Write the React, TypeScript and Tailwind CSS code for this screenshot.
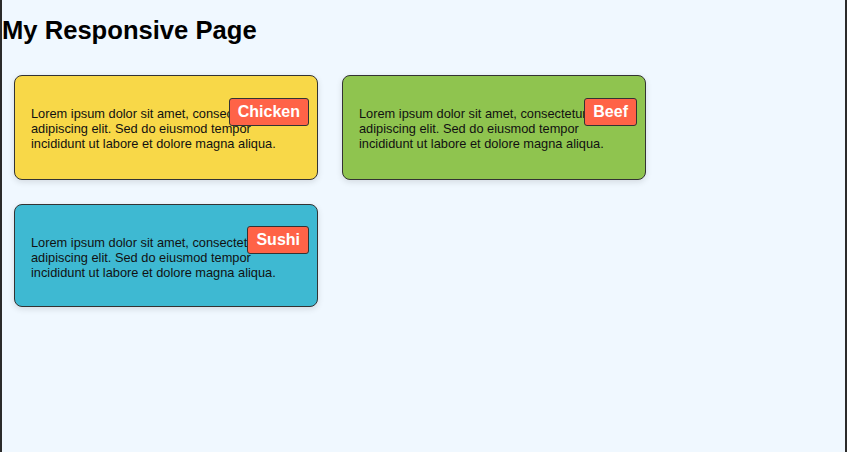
const lorem =
  "Lorem ipsum dolor sit amet, consectetur adipiscing elit. Sed do eiusmod tempor incididunt ut labore et dolore magna aliqua.";

type Card = {
  label: string;
  bg: string;
  pad: string;
  badgeTop: string;
};

const cards: Card[] = [
  { label: "Chicken", bg: "bg-[#f8d848]", pad: "pt-[30px] pb-[28px]", badgeTop: "top-[22px]" },
  { label: "Beef", bg: "bg-[#8fc44f]", pad: "pt-[30px] pb-[28px]", badgeTop: "top-[22px]" },
  { label: "Sushi", bg: "bg-[#3eb9d2]", pad: "pt-[30px] pb-[26px]", badgeTop: "top-[21px]" },
];

export default function App() {
  return (
    <div
      className="min-h-screen bg-[#f0f8ff] border-x-2 border-[#2b2b2b] text-black"
      style={{ fontFamily: '"Liberation Sans", Arial, sans-serif' }}
    >
      <h1 className="pt-[16px] text-[25.6px] font-bold leading-[29px]">My Responsive Page</h1>

      <div className="mt-[30px] px-3 flex flex-wrap gap-6 items-start">
        {cards.map((c) => (
          <div
            key={c.label}
            className={`relative w-[304px] ${c.bg} ${c.pad} px-4 border border-[#333] rounded-lg shadow-[0_2px_6px_rgba(0,0,0,0.12)]`}
          >
            <p className="text-[12.8px] leading-[15px] text-[#111]">{lorem}</p>
            <span
              className={`absolute ${c.badgeTop} right-2 bg-[#ff6347] border border-[#333] rounded-[3px] px-2 py-1 text-white font-bold text-base leading-[18px]`}
            >
              {c.label}
            </span>
          </div>
        ))}
      </div>
    </div>
  );
}
